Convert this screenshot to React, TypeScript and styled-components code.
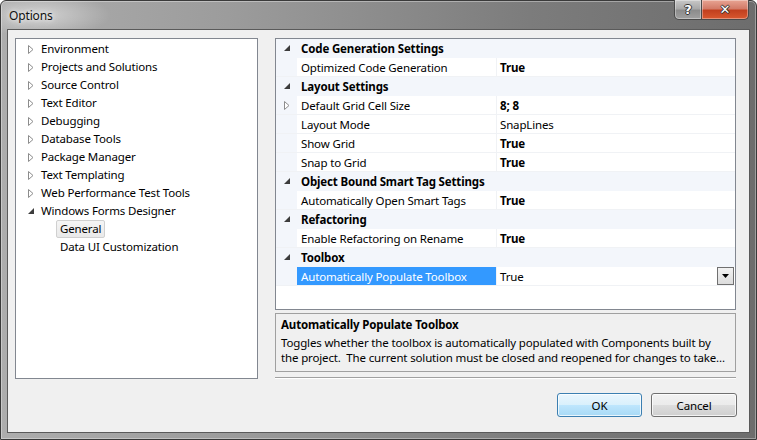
import React from "react";
import styled, { createGlobalStyle } from "styled-components";

const Global = createGlobalStyle`
  html, body { margin: 0; padding: 0; background: #fff; }
  body { font-family: "Noto Sans", "Open Sans", sans-serif; font-size: 11.5px; letter-spacing: -0.15px; color: #000; }
  * { box-sizing: border-box; }
`;

const Window = styled.div`
  width: 757px;
  height: 440px;
  display: flex;
  flex-direction: column;
  padding: 0 6px 6px 6px;
  border: 1px solid #3a3a3a;
  border-radius: 6px 6px 0 0;
  background:
    radial-gradient(ellipse 70px 22px at 40px 14px, rgba(255,255,255,0.45), rgba(255,255,255,0) 100%),
    linear-gradient(90deg, #adadad 0%, #9c9c9c 30%, #7c7c7c 70%, #6d6d6d 100%);
  box-shadow: inset 0 0 0 1px rgba(255,255,255,0.35);
`;

const TitleBar = styled.div`
  height: 28px;
  display: flex;
  align-items: flex-start;
  justify-content: space-between;
`;

const Title = styled.div`
  margin-top: 6px;
  margin-left: 2px;
  font-size: 12px;
  color: #111;
  text-shadow: 0 0 8px rgba(255,255,255,0.9), 0 0 4px rgba(255,255,255,0.8);
`;

const CaptionButtons = styled.div`
  display: flex;
  margin-top: -1px;
  margin-right: 1px;
`;

const CapBtn = styled.div<{ $close?: boolean }>`
  height: 20px;
  width: ${(p) => (p.$close ? "47px" : "28px")};
  border: 1px solid #4a4a4a;
  border-top: none;
  border-left: ${(p) => (p.$close ? "none" : "1px solid #4a4a4a")};
  border-radius: ${(p) => (p.$close ? "0 0 5px 0" : "0 0 0 5px")};
  display: flex;
  align-items: center;
  justify-content: center;
  box-shadow: inset 0 0 0 1px rgba(255,255,255,0.35);
  background: ${(p) =>
    p.$close
      ? "linear-gradient(180deg, #e8a493 0%, #d37b68 45%, #c2401f 55%, #d9582f 100%)"
      : "linear-gradient(180deg, #c8c8c8 0%, #a9a9a9 45%, #8c8c8c 55%, #a0a0a0 100%)"};
`;

const CapGlyph = styled.span`
  font-family: "DejaVu Sans", sans-serif;
  font-weight: bold;
  font-size: 13px;
  line-height: 1;
  letter-spacing: 0;
  color: #fff;
  text-shadow: 1px 0 0 #333, -1px 0 0 #333, 0 1px 0 #333, 0 -1px 0 #333;
`;

const Client = styled.div`
  flex: 1;
  border: 1px solid #5a5a5a;
  background: #f0f0f0;
  display: flex;
  flex-direction: column;
  padding: 8px 12px 0 7px;
`;

const Main = styled.div`
  display: flex;
  gap: 17px;
`;

const Tree = styled.div`
  width: 243px;
  height: 341px;
  border: 1px solid #828790;
  background: #fff;
  padding-top: 1px;
`;

const TreeRow = styled.div<{ $indent?: number }>`
  height: 18px;
  display: flex;
  align-items: center;
  padding-left: ${(p) => 12 + (p.$indent || 0) * 19}px;
`;

const Expander = styled.span`
  width: 10px;
  height: 18px;
  display: flex;
  align-items: center;
  justify-content: flex-start;
  flex-shrink: 0;
`;

const TreeLabel = styled.span<{ $selected?: boolean }>`
  white-space: nowrap;
  padding: 0 3px;
  margin-left: -1px;
  line-height: 16px;
  border: 1px solid ${(p) => (p.$selected ? "#d0d0d0" : "transparent")};
  border-radius: 2px;
  background: ${(p) => (p.$selected ? "linear-gradient(180deg,#f5f5f5,#e9e9e9)" : "transparent")};
`;

const RightCol = styled.div`
  width: 461px;
  display: flex;
  flex-direction: column;
`;

const Grid = styled.div`
  height: 272px;
  border: 1px solid #828790;
  background: #fff;
`;

const GridRow = styled.div<{ $header?: boolean }>`
  height: 19px;
  display: grid;
  grid-template-columns: 21px 199px 1px 1fr;
  align-items: stretch;
  background: ${(p) => (p.$header ? "#f3f6fb" : "#fff")};
  border-bottom: 1px solid ${(p) => (p.$header ? "#f3f6fb" : "#f0f2f5")};
`;

const Gutter = styled.div`
  background: #f3f6fb;
  display: flex;
  align-items: center;
  padding-left: 8px;
`;

const HeaderLabel = styled.div`
  grid-column: 2 / 5;
  font-weight: bold;
  display: flex;
  align-items: center;
  padding-left: 4px;
  white-space: nowrap;
`;

const NameCell = styled.div<{ $selected?: boolean }>`
  display: flex;
  align-items: center;
  padding-left: 4px;
  white-space: nowrap;
  overflow: hidden;
  background: ${(p) => (p.$selected ? "#3399ff" : "transparent")};
  color: ${(p) => (p.$selected ? "#fff" : "#000")};
`;

const Divider = styled.div`
  background: #f0f2f5;
`;

const ValueCell = styled.div<{ $bold?: boolean }>`
  display: flex;
  align-items: center;
  justify-content: space-between;
  padding-left: 3px;
  padding-right: 1px;
  font-weight: ${(p) => (p.$bold ? "bold" : "normal")};
  white-space: nowrap;
`;

const DropBtn = styled.div`
  width: 17px;
  height: 18px;
  border: 1px solid #707070;
  background: linear-gradient(180deg, #f2f2f2, #dcdcdc);
  display: flex;
  align-items: center;
  justify-content: center;
`;

const Desc = styled.div`
  margin-top: 3px;
  height: 59px;
  border: 1px solid #a0a0a0;
  background: #f0f0f0;
  padding: 3px 5px 0 5px;
  white-space: nowrap;
  overflow: hidden;
`;

const DescTitle = styled.div`
  font-weight: bold;
  line-height: 16px;
`;

const DescText = styled.div`
  line-height: 15px;
  margin-top: 2px;
`;

const Separator = styled.div`
  margin-top: 5px;
  height: 2px;
  border-top: 1px solid #a0a0a0;
  border-bottom: 1px solid #fff;
`;

const Footer = styled.div`
  display: flex;
  justify-content: flex-end;
  gap: 9px;
  margin-top: 14px;
`;

const Button = styled.div<{ $default?: boolean; $w: number }>`
  width: ${(p) => p.$w}px;
  height: 24px;
  border: 1px solid ${(p) => (p.$default ? "#3c7fb1" : "#707070")};
  border-radius: 3px;
  display: flex;
  align-items: center;
  justify-content: center;
  background: ${(p) =>
    p.$default
      ? "linear-gradient(180deg, #eaf6fd 0%, #d9f0fc 50%, #bee6fd 51%, #a7d9f5 100%)"
      : "linear-gradient(180deg, #f2f2f2 0%, #ebebeb 50%, #dddddd 51%, #cfcfcf 100%)"};
  box-shadow: inset 0 0 0 1px rgba(255,255,255,0.75);
`;

const Hollow = () => (
  <svg width="6" height="9" viewBox="0 0 6 9">
    <path d="M0.5 0.5 L5 4.5 L0.5 8.5 Z" fill="#fff" stroke="#8c8c8c" strokeWidth="1" />
  </svg>
);

const Filled = () => (
  <svg width="6" height="6" viewBox="0 0 6 6">
    <path d="M6 0 L6 6 L0 6 Z" fill="#3c3c3c" />
  </svg>
);

const DownArrow = () => (
  <svg width="7" height="4" viewBox="0 0 7 4">
    <path d="M0 0 L7 0 L3.5 4 Z" fill="#000" />
  </svg>
);

const treeItems: { label: string; kind: "c" | "e" | "l"; indent?: number; selected?: boolean }[] = [
  { label: "Environment", kind: "c" },
  { label: "Projects and Solutions", kind: "c" },
  { label: "Source Control", kind: "c" },
  { label: "Text Editor", kind: "c" },
  { label: "Debugging", kind: "c" },
  { label: "Database Tools", kind: "c" },
  { label: "Package Manager", kind: "c" },
  { label: "Text Templating", kind: "c" },
  { label: "Web Performance Test Tools", kind: "c" },
  { label: "Windows Forms Designer", kind: "e" },
  { label: "General", kind: "l", indent: 1, selected: true },
  { label: "Data UI Customization", kind: "l", indent: 1 },
];

type Row =
  | { type: "h"; label: string }
  | { type: "p"; name: string; value: string; bold?: boolean; expandable?: boolean; selected?: boolean };

const rows: Row[] = [
  { type: "h", label: "Code Generation Settings" },
  { type: "p", name: "Optimized Code Generation", value: "True", bold: true },
  { type: "h", label: "Layout Settings" },
  { type: "p", name: "Default Grid Cell Size", value: "8; 8", bold: true, expandable: true },
  { type: "p", name: "Layout Mode", value: "SnapLines" },
  { type: "p", name: "Show Grid", value: "True", bold: true },
  { type: "p", name: "Snap to Grid", value: "True", bold: true },
  { type: "h", label: "Object Bound Smart Tag Settings" },
  { type: "p", name: "Automatically Open Smart Tags", value: "True", bold: true },
  { type: "h", label: "Refactoring" },
  { type: "p", name: "Enable Refactoring on Rename", value: "True", bold: true },
  { type: "h", label: "Toolbox" },
  { type: "p", name: "Automatically Populate Toolbox", value: "True", selected: true },
];

export default function App() {
  return (
    <>
      <Global />
      <Window>
        <TitleBar>
          <Title>Options</Title>
          <CaptionButtons>
            <CapBtn>
              <CapGlyph>?</CapGlyph>
            </CapBtn>
            <CapBtn $close>
              <CapGlyph>✕</CapGlyph>
            </CapBtn>
          </CaptionButtons>
        </TitleBar>
        <Client>
          <Main>
            <Tree>
              {treeItems.map((t) => (
                <TreeRow key={t.label} $indent={t.indent}>
                  <Expander>{t.kind === "c" ? <Hollow /> : t.kind === "e" ? <Filled /> : null}</Expander>
                  <TreeLabel $selected={t.selected}>{t.label}</TreeLabel>
                </TreeRow>
              ))}
            </Tree>
            <RightCol>
              <Grid>
                {rows.map((r, i) =>
                  r.type === "h" ? (
                    <GridRow key={i} $header>
                      <Gutter>
                        <Filled />
                      </Gutter>
                      <HeaderLabel>{r.label}</HeaderLabel>
                    </GridRow>
                  ) : (
                    <GridRow key={i}>
                      <Gutter>{r.expandable ? <Hollow /> : null}</Gutter>
                      <NameCell $selected={r.selected}>{r.name}</NameCell>
                      <Divider />
                      <ValueCell $bold={r.bold}>
                        <span>{r.value}</span>
                        {r.selected ? (
                          <DropBtn>
                            <DownArrow />
                          </DropBtn>
                        ) : null}
                      </ValueCell>
                    </GridRow>
                  )
                )}
              </Grid>
              <Desc>
                <DescTitle>Automatically Populate Toolbox</DescTitle>
                <DescText>
                  Toggles whether the toolbox is automatically populated with Components built by
                  <br />
                  the project.&nbsp; The current solution must be closed and reopened for changes to take...
                </DescText>
              </Desc>
              <Separator />
            </RightCol>
          </Main>
          <Footer>
            <Button $default $w={85}>OK</Button>
            <Button $w={86}>Cancel</Button>
          </Footer>
        </Client>
      </Window>
    </>
  );
}
